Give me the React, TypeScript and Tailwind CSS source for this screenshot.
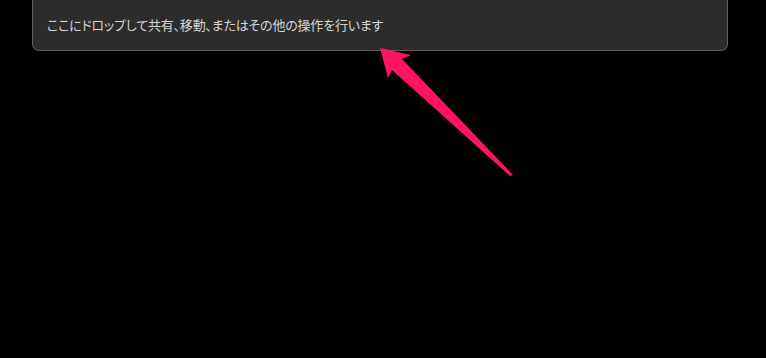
export default function App() {
  return (
    <div className="relative w-[766px] h-[358px] bg-black overflow-hidden">
      <div className="ml-[32px] w-[696px] h-[51px] bg-[#2c2c2c] border border-t-0 border-[#5c5c5c] rounded-b-[7px] flex items-center pl-[14px]">
        <span
          className="text-[13px] text-[#d6d6d6] [font-feature-settings:'palt'] tracking-[-0.2px]"
          style={{ fontFamily: '"Noto Sans CJK JP", sans-serif' }}
        >
          ここにドロップして共有、移動、またはその他の操作を行います
        </span>
      </div>
      <svg
        className="absolute left-0 top-0"
        width="766"
        height="358"
        viewBox="0 0 766 358"
      >
        <polygon
          points="380,48 411,55 402,59 513,175 510,176 392,70 388,78"
          fill="#ff1464"
          strokeLinejoin="round"
        />
      </svg>
    </div>
  )
}
